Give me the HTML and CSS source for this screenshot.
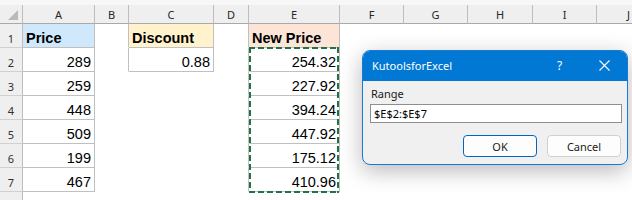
FILE: index.html
```html
<!DOCTYPE html>
<html>
<head>
<meta charset="utf-8">
<link rel="stylesheet" href="styles.css">
</head>
<body>
<div class="sheet">
  <div class="topstrip"></div>
  <div class="grid">
    <div class="corner"><svg width="10" height="10" viewBox="0 0 10 10"><polygon points="10,0 10,10 0,10" fill="#b9b9b9"/></svg></div>
    <div class="ch">A</div><div class="ch">B</div><div class="ch">C</div><div class="ch">D</div><div class="ch">E</div><div class="ch">F</div><div class="ch">G</div><div class="ch">H</div><div class="ch">I</div><div class="ch">J</div>

    <div class="rh">1</div><div class="c bd blue b">Price</div><div class="c rb"></div><div class="c bd yellow b">Discount</div><div class="c rb"></div><div class="c bd peach b">New Price</div><div class="c"></div><div class="c"></div><div class="c"></div><div class="c"></div><div class="c"></div>

    <div class="rh">2</div><div class="c bd n">289</div><div class="c rb"></div><div class="c bd n">0.88</div><div class="c rb"></div><div class="c bd n">254.32</div><div class="c"></div><div class="c"></div><div class="c"></div><div class="c"></div><div class="c"></div>

    <div class="rh">3</div><div class="c bd n">259</div><div class="c"></div><div class="c"></div><div class="c rb"></div><div class="c bd n">227.92</div><div class="c"></div><div class="c"></div><div class="c"></div><div class="c"></div><div class="c"></div>

    <div class="rh">4</div><div class="c bd n">448</div><div class="c"></div><div class="c"></div><div class="c rb"></div><div class="c bd n">394.24</div><div class="c"></div><div class="c"></div><div class="c"></div><div class="c"></div><div class="c"></div>

    <div class="rh">5</div><div class="c bd n">509</div><div class="c"></div><div class="c"></div><div class="c rb"></div><div class="c bd n">447.92</div><div class="c"></div><div class="c"></div><div class="c"></div><div class="c"></div><div class="c"></div>

    <div class="rh">6</div><div class="c bd n">199</div><div class="c"></div><div class="c"></div><div class="c rb"></div><div class="c bd n">175.12</div><div class="c"></div><div class="c"></div><div class="c"></div><div class="c"></div><div class="c"></div>

    <div class="rh">7</div><div class="c bd n">467</div><div class="c"></div><div class="c"></div><div class="c rb"></div><div class="c bd n">410.96</div><div class="c"></div><div class="c"></div><div class="c"></div><div class="c"></div><div class="c"></div>

    <div class="rh">8</div><div class="c"></div><div class="c"></div><div class="c"></div><div class="c"></div><div class="c"></div><div class="c"></div><div class="c"></div><div class="c"></div><div class="c"></div><div class="c"></div>

    <div class="ants"></div>
  </div>

  <div class="dialog">
    <div class="dtitle">
      <span class="dt-text">KutoolsforExcel</span>
      <span class="dt-btn">?</span>
      <span class="dt-btn"><svg width="11" height="11" viewBox="0 0 11 11"><path d="M0.5 0.5 L10.5 10.5 M10.5 0.5 L0.5 10.5" stroke="#ffffff" stroke-width="1.1" fill="none"/></svg></span>
    </div>
    <div class="dbody">
      <div class="dlabel">Range</div>
      <div class="dinput">$E$2:$E$7</div>
      <div class="dbtns">
        <div class="btn primary">OK</div>
        <div class="btn">Cancel</div>
      </div>
    </div>
  </div>
</div>
</body>
</html>
```

FILE: styles.css
```css
* { box-sizing: border-box; }
html, body { margin: 0; padding: 0; background: #ffffff; }
body { width: 632px; height: 200px; overflow: hidden; }

.sheet {
  position: relative;
  width: 632px;
  height: 200px;
  overflow: hidden;
  font-family: "Liberation Sans", Arial, sans-serif;
}

.topstrip { height: 5px; background: #f7f7f7; }

.grid {
  position: relative;
  display: grid;
  grid-template-columns: 23px 72px 34px 85px 35px 91px 64px 64px 65px 64px 64px;
  grid-template-rows: 19px repeat(8, 24px);
}

.corner {
  background: #efefef;
  border-right: 1px solid #bdbdbd;
  border-bottom: 1px solid #a9a9a9;
  display: flex;
  align-items: flex-end;
  justify-content: flex-end;
  padding: 0 4px 3px 0;
}
.corner svg { display: block; }

.ch {
  background: #efefef;
  border-right: 1px solid #bdbdbd;
  border-bottom: 1px solid #a9a9a9;
  font-family: "Noto Sans", sans-serif;
  font-size: 11px;
  color: #262626;
  display: flex;
  align-items: center;
  justify-content: center;
  line-height: 15px;
}

.rh {
  background: #efefef;
  border-right: 1px solid #bdbdbd;
  border-bottom: 1px solid #d0d0d0;
  font-family: "Noto Sans", sans-serif;
  font-size: 11px;
  color: #303030;
  display: flex;
  align-items: flex-end;
  justify-content: center;
  line-height: 13px;
  padding-bottom: 2px;
}

.c {
  border-right: 1px solid transparent;
  border-bottom: 1px solid transparent;
  font-size: 14.5px;
  line-height: 17px;
  color: #000000;
  display: flex;
  align-items: flex-end;
  padding: 0 3px;
  white-space: nowrap;
}
.bd { border-right-color: #c0c0c0; border-bottom-color: #c0c0c0; }
.rb { border-right-color: #c0c0c0; }
.n { justify-content: flex-end; }
.b { font-weight: bold; }
.blue { background: #cfe8fb; }
.yellow { background: #fff2cc; }
.peach { background: #fce4d6; }

.ants {
  position: absolute;
  grid-column: 6 / 7;
  grid-row: 3 / 9;
  top: -1px;
  bottom: -1px;
  left: 0;
  right: 1px;
  background:
    repeating-linear-gradient(90deg, #217346 0 6px, transparent 6px 9px) left top / 100% 2px no-repeat,
    repeating-linear-gradient(90deg, #217346 0 6px, transparent 6px 9px) left bottom / 100% 2px no-repeat,
    repeating-linear-gradient(180deg, #217346 0 6px, transparent 6px 9px) left top / 2px 100% no-repeat,
    repeating-linear-gradient(180deg, #217346 0 6px, transparent 6px 9px) right top / 2px 100% no-repeat;
}

.dialog {
  position: absolute;
  left: 362px;
  top: 50px;
  width: 266px;
  height: 115px;
  border: 1px solid #1a79d2;
  border-radius: 8px;
  background: #f0f0f0;
  overflow: hidden;
  box-shadow: 0 6px 22px rgba(0, 0, 0, 0.28);
  font-family: "Noto Sans", sans-serif;
  font-size: 11px;
  color: #1a1a1a;
  display: flex;
  flex-direction: column;
}

.dtitle {
  height: 30px;
  background: #0078d4;
  color: #ffffff;
  display: flex;
  align-items: center;
  padding-left: 9px;
  padding-bottom: 2px;
  line-height: 15px;
}
.dt-text { flex: 1; }
.dt-btn {
  width: 45px;
  height: 28px;
  display: flex;
  align-items: center;
  justify-content: center;
  font-size: 12px;
}
.dt-btn svg { display: block; }

.dbody {
  flex: 1;
  padding: 5px 5px 0 7px;
  display: flex;
  flex-direction: column;
}
.dlabel { line-height: 15px; margin-left: 1px; }
.dinput {
  margin-top: 3px;
  height: 19px;
  background: #ffffff;
  border: 1px solid #8f8f8f;
  font-size: 11px;
  line-height: 17px;
  padding-left: 3px;
  color: #000000;
}
.dbtns {
  margin-top: 12px;
  display: flex;
  justify-content: flex-end;
  gap: 10px;
  padding-right: 1px;
}
.btn {
  width: 74px;
  height: 22px;
  border: 1px solid #d0d0d0;
  border-radius: 4px;
  background: #fdfdfd;
  display: flex;
  align-items: center;
  justify-content: center;
  line-height: 15px;
  color: #1a1a1a;
}
.btn.primary { border-color: #0067c0; }
```
